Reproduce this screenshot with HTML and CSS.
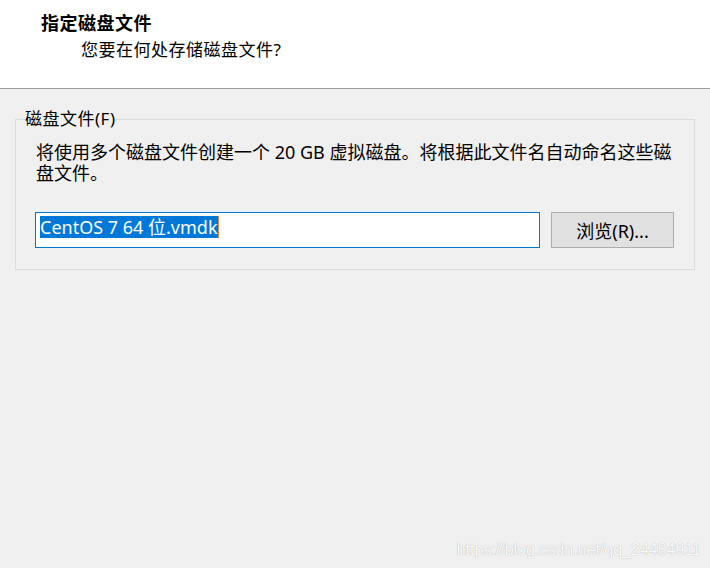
FILE: index.html
```html
<!DOCTYPE html>
<html lang="zh-CN">
<head>
  <meta charset="UTF-8" />
  <meta name="viewport" content="width=device-width, initial-scale=1.0" />
  <title>指定磁盘文件</title>
  <link rel="stylesheet" href="styles.css">
</head>
<body>
  <div class="header">
    <h1>指定磁盘文件</h1>
    <div class="subtitle">您要在何处存储磁盘文件?</div>
  </div>

  <div class="main">
    <fieldset class="group">
      <legend>磁盘文件(F)</legend>
      <div class="desc">将使用多个磁盘文件创建一个 20 GB 虚拟磁盘。将根据此文件名自动命名这些磁盘文件。</div>
      <div class="file-row">
        <div class="file-input"><span class="selected">CentOS 7 64 位.vmdk</span></div>
        <button class="browse">浏览(R)...</button>
      </div>
    </fieldset>
  </div>

  <div class="watermark">https://blog.csdn.net/qq_24484911</div>
</body>
</html>
```

FILE: styles.css
```css
:root {
  --bg: #f0f0f0;
  --text: #000;
  --line: #a0a0a0;
  --group: #dcdcdc;
  --accent: #0078d7;
}

html, body {
  height: 100%;
}

body {
  margin: 0;
  background: var(--bg);
  color: var(--text);
  font-family: "Noto Sans", "Noto Sans CJK SC", sans-serif;
  font-size: 18px;
  position: relative;
  overflow: hidden;
}

.header {
  background: #fff;
  height: 89px;
  box-sizing: border-box;
  border-bottom: 1px solid var(--line);
  padding-top: 12px;
}

h1 {
  margin: 0;
  padding-left: 41px;
  font-size: 18px;
  font-weight: bold;
  line-height: 22px;
  letter-spacing: 0.5px;
}

.subtitle {
  padding-left: 81px;
  margin-top: 5px;
  font-size: 17px;
  line-height: 22px;
  letter-spacing: 0.5px;
}

.main {
  padding: 19px 15px 0;
}

.group {
  margin: 0;
  padding: 12px 20px 21px 19px;
  border: 1px solid var(--group);
}

.group legend {
  margin-left: -10px;
  padding: 0;
  font-size: 17px;
  line-height: 22px;
  letter-spacing: 0.5px;
}

.desc {
  padding-left: 1px;
  line-height: 21px;
}

.file-row {
  display: flex;
  gap: 11px;
  margin-top: 28px;
}

.file-input {
  flex: 1;
  height: 36px;
  box-sizing: border-box;
  border: 1px solid var(--accent);
  background: #fff;
  padding: 2px 4px;
}

.selected {
  display: inline-block;
  background: var(--accent);
  color: #fff;
  line-height: 22px;
  font-size: 18px;
  border-right: 1px solid #d98c3c;
}

.browse {
  width: 123px;
  height: 36px;
  background: #e1e1e1;
  border: 1px solid #adadad;
  font-family: inherit;
  font-size: 18px;
  color: var(--text);
  padding: 0;
}

.watermark {
  position: absolute;
  right: 9px;
  bottom: 9px;
  font-family: "Liberation Sans", Arial, sans-serif;
  font-size: 16px;
  color: #fafafa;
  text-shadow: 0 0 1px #b8b8b8, 0 0 1px #c8c8c8;
}
```
